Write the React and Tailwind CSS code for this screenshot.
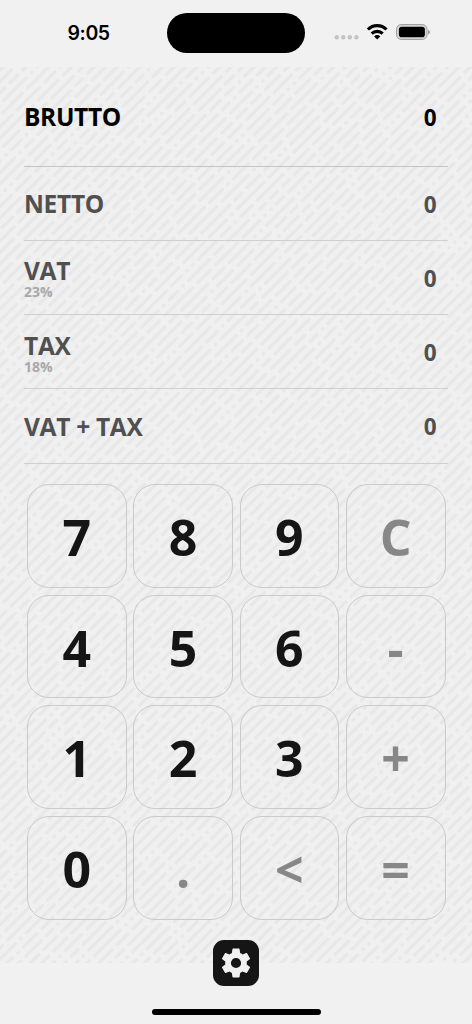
import React from "react";

// Deterministic dashes for the diagonal wallpaper.
let seed = 41;
const rand = () => {
  seed = (seed * 16807) % 2147483647;
  return seed / 2147483647;
};
const PITCH = 11.4;
const strokes = [];
for (let c = 3; c < 1400; c += PITCH) {
  let x = Math.max(0, c - 905) - rand() * 20;
  const end = Math.min(478, c + 5);
  while (x < end) {
    const len = rand() < 0.22 ? 0.6 : 6 + rand() * 22;
    strokes.push(`M${x.toFixed(1)} ${(c - x).toFixed(1)}l${len.toFixed(1)} ${(-len).toFixed(1)}`);
    x += len + 5.2;
  }
}
const wallpaper = strokes.join("");

const rows = [
  { label: "NETTO" },
  { label: "VAT", rate: "23%" },
  { label: "TAX", rate: "18%" },
  { label: "VAT + TAX" },
];
const keys = ["7", "8", "9", "C", "4", "5", "6", "-", "1", "2", "3", "+", "0", ".", "<", "="];

function StatusBar() {
  return (
    <header className="relative flex h-[67px] shrink-0 items-start justify-between pl-[67.5px] pr-[40px]">
      <span className="mt-[19px] font-['Inter',sans-serif] text-[19.5px] font-semibold leading-[28px] tracking-[-0.4px]">9:05</span>
      <div className="absolute left-[167px] top-[12.5px] h-[40.5px] w-[138px] rounded-full bg-black" />
      <svg className="mt-[20px] h-6 w-[98px]" viewBox="0 0 98 24" fill="none">
        <g fill="#c3c3c3">
          <circle cx="2.7" cy="17.3" r="2.2" />
          <circle cx="9.2" cy="17.3" r="2.2" />
          <circle cx="15.8" cy="17.3" r="2.2" />
          <circle cx="22.4" cy="17.3" r="2.2" />
        </g>
        <g stroke="#000" strokeWidth="3.1">
          <path d="M33.9 9.5a13.2 13.2 0 0 1 18.6 0" />
          <path d="M37.7 13.6a7.9 7.9 0 0 1 11 0" />
        </g>
        <path d="M43.2 19.6l-3.1-3.2a4.5 4.5 0 0 1 6.2 0z" fill="#000" />
        <rect x="62.6" y="4.6" width="30.4" height="14.8" rx="4.6" fill="#dadada" stroke="#999" />
        <rect x="64.9" y="6.8" width="26" height="10.4" rx="2.8" fill="#000" />
        <path d="M94.3 9.8c2 .8 2 3.8 0 4.6z" fill="#888" />
      </svg>
    </header>
  );
}

export default function App() {
  return (
    <div className="flex h-[1024px] w-[472px] flex-col overflow-hidden bg-[#f1f1f1] font-['Open_Sans',sans-serif] font-bold text-black">
      <StatusBar />
      <main className="relative isolate h-[896px] shrink-0 bg-[#f0f0f0]">
        <svg className="absolute inset-0 -z-10 h-[896px] w-[472px]" viewBox="0 0 472 896" fill="none">
          <path d={wallpaper} stroke="#e8e8e8" strokeWidth="3.3" strokeLinecap="round" />
        </svg>
        <section className="mx-6">
          <div className="flex h-[99.5px] items-center justify-between border-b-[1.5px] border-[#c4c4c4] pr-[11.5px] pt-[3px]">
            <span className="pb-[2px] text-[24.5px] leading-8 tracking-[-0.35px]">BRUTTO</span>
            <span className="text-[22.5px] leading-8">0</span>
          </div>
          {rows.map((row) => (
            <div key={row.label} className="flex h-[74.25px] items-center justify-between border-b border-[#cfcfcf] pr-[11.5px] pt-[2px] text-[#505050]">
              <div className={row.rate ? "flex flex-col pt-[2px]" : "flex flex-col pb-px"}>
                <span className="text-[24.5px] leading-[25px] tracking-[-0.3px]">{row.label}</span>
                {row.rate && <span className="text-[14px] leading-[17px] text-[#a9a9a9]">{row.rate}</span>}
              </div>
              <span className="pt-px text-[22.5px] leading-8">0</span>
            </div>
          ))}
        </section>
        <section className="ml-[27px] mt-[20.5px] grid w-[418.5px] grid-cols-4 gap-x-[6.5px] gap-y-[7px]">
          {keys.map((key) => (
            <button
              key={key}
              className={`flex h-[103.7px] items-center justify-center rounded-[22px] border border-[#cacaca] pt-[2px] text-[50px] leading-none ${/\d/.test(key) ? "text-[#151515]" : "text-[#878787]"}`}
            >
              {key}
            </button>
          ))}
        </section>
      </main>
      <footer className="relative z-10 -mt-[23px] flex flex-col items-center">
        <button className="flex h-[46px] w-[46px] items-center justify-center rounded-[11px] bg-[#151515]">
          <svg className="h-[36px] w-[36px]" viewBox="0 0 24 24" fill="#f1f1f1">
            <path d="M19.14 12.94c.04-.3.06-.61.06-.94s-.02-.64-.07-.94l2.03-1.58a.49.49 0 0 0 .12-.61l-1.92-3.32a.49.49 0 0 0-.59-.22l-2.39.96a7.03 7.03 0 0 0-1.62-.94l-.36-2.54A.48.48 0 0 0 13.92 2.4h-3.84c-.24 0-.43.17-.47.41l-.36 2.54c-.59.24-1.13.57-1.62.94l-2.39-.96a.48.48 0 0 0-.59.22L2.74 8.87a.48.48 0 0 0 .12.61l2.03 1.58c-.05.3-.09.63-.09.94s.02.64.07.94l-2.03 1.58a.49.49 0 0 0-.12.61l1.92 3.32c.12.22.37.29.59.22l2.39-.96c.5.38 1.03.7 1.62.94l.36 2.54c.05.24.24.41.48.41h3.84c.24 0 .44-.17.47-.41l.36-2.54c.59-.24 1.13-.56 1.62-.94l2.39.96c.22.08.47 0 .59-.22l1.92-3.32a.48.48 0 0 0-.12-.61zM12 15.4a3.4 3.4 0 1 1 0-6.8 3.4 3.4 0 0 1 0 6.8z" />
          </svg>
        </button>
        <div className="mt-[23px] h-[5.5px] w-[169px] rounded-full bg-black" />
      </footer>
    </div>
  );
}
